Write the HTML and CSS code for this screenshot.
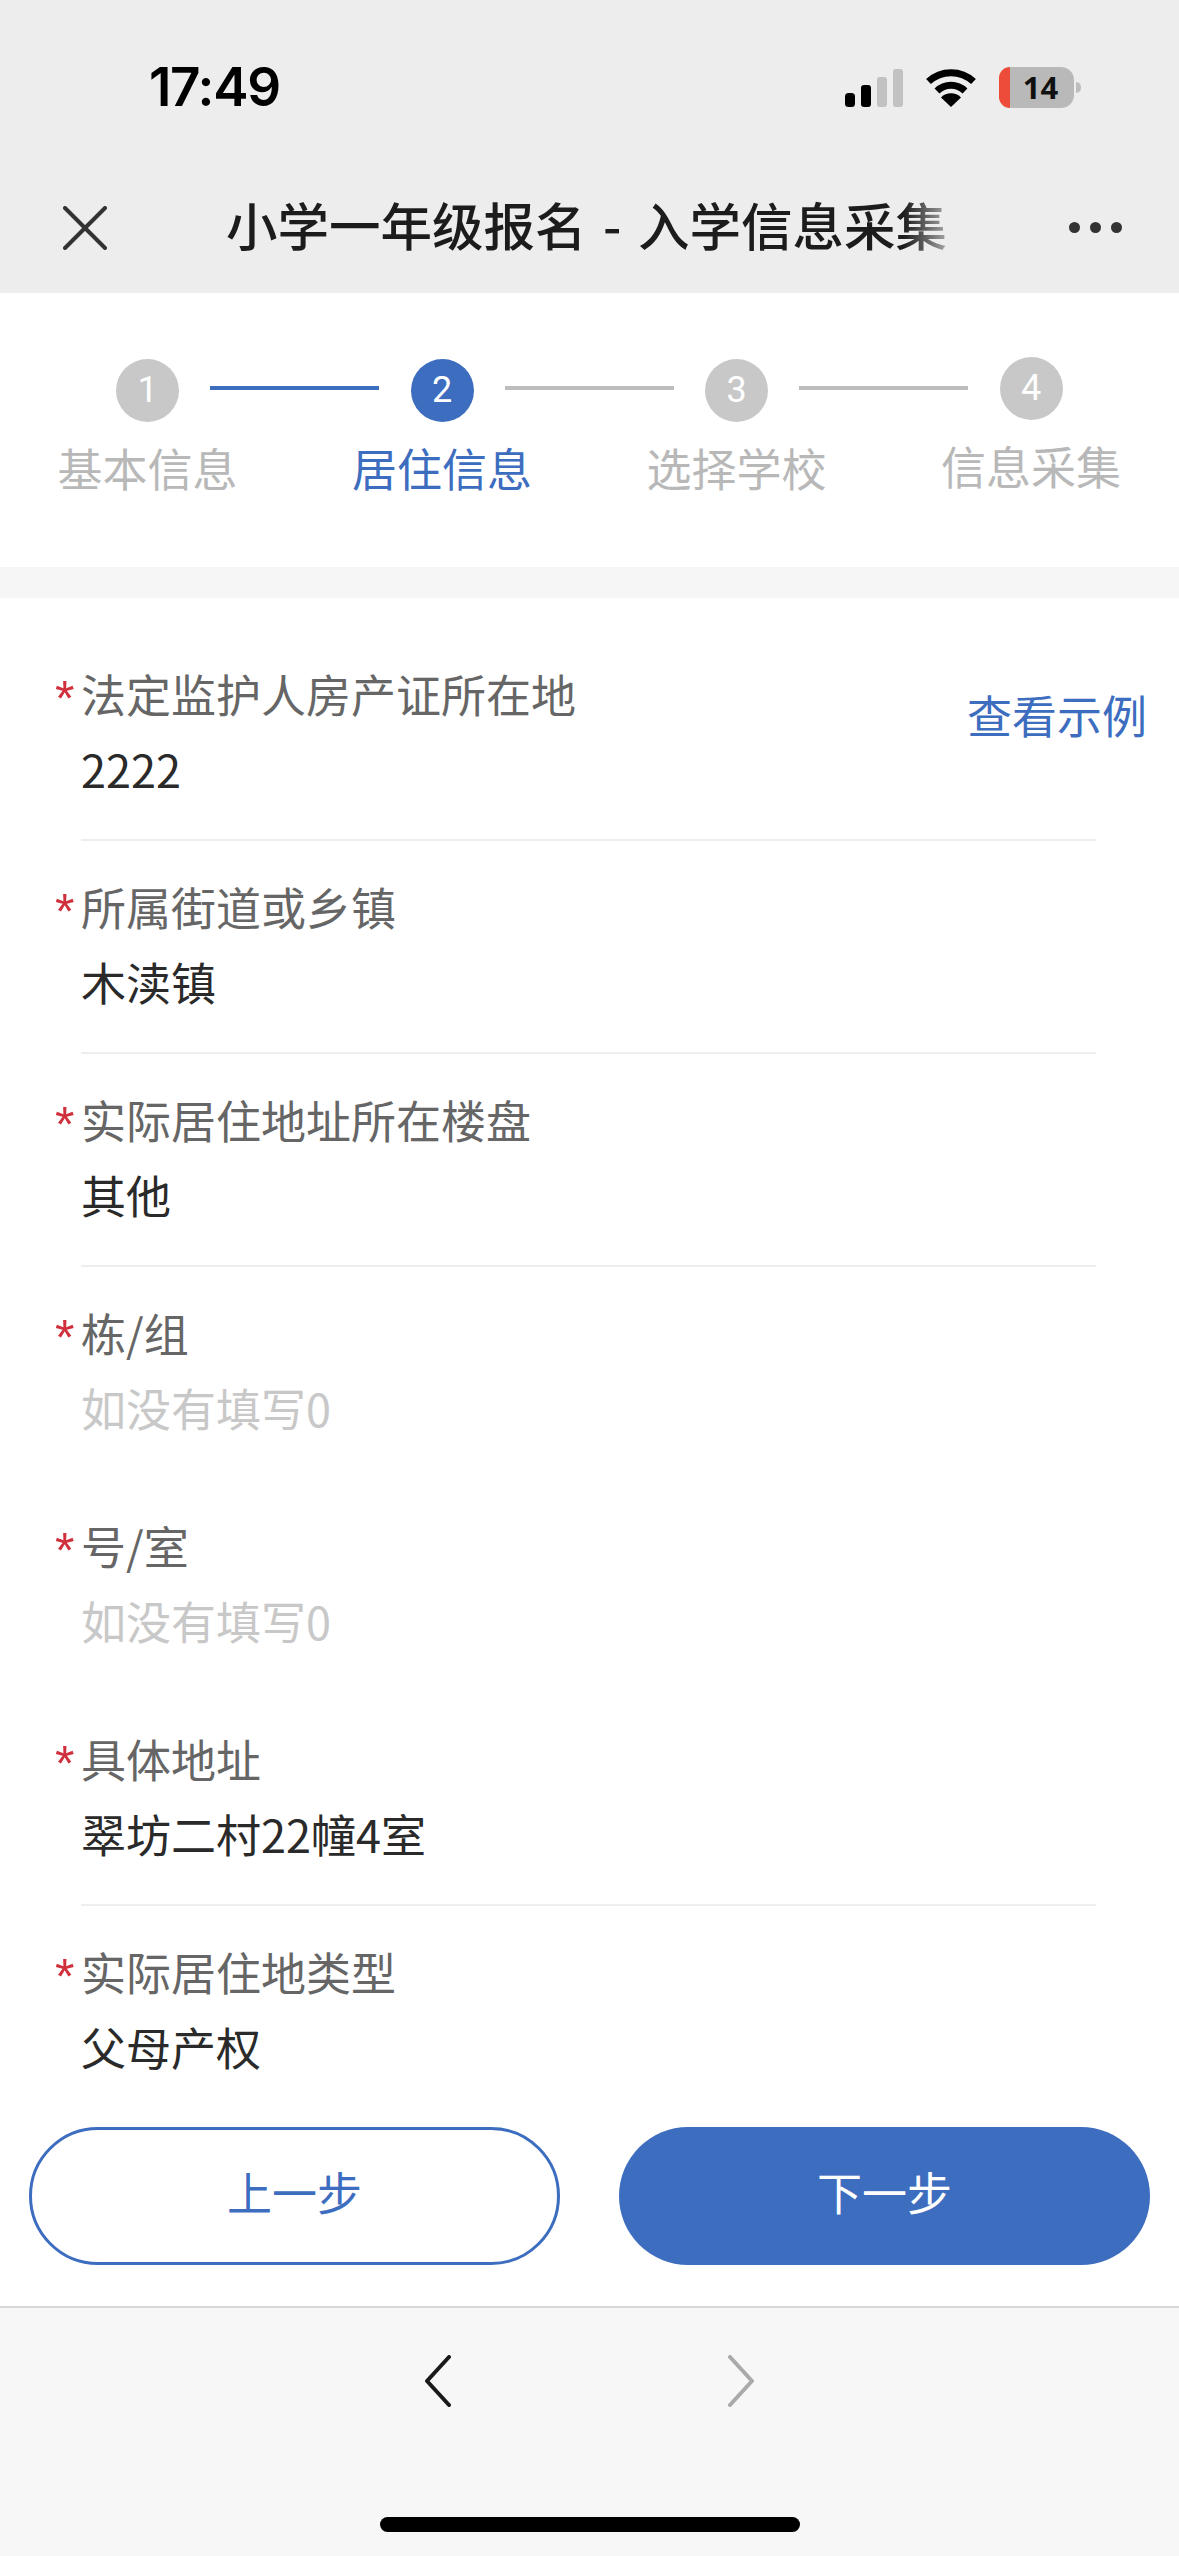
FILE: index.html
```html
<!DOCTYPE html>
<html lang="zh-CN">
<head>
<meta charset="utf-8">
<title>小学一年级报名 - 入学信息采集</title>
<link rel="stylesheet" href="styles.css">
</head>
<body>
<div class="phone">
  <header class="top">
    <div class="status">
      <span class="time">17:49</span>
      <div class="status-icons">
        <svg class="signal" width="58" height="38" viewBox="0 0 58 38"><rect x="0" y="24" width="10" height="14" rx="3.5" fill="#000"/><rect x="16" y="16" width="10" height="22" rx="3" fill="#000"/><rect x="32" y="8" width="10" height="30" rx="3" fill="#c2c2c2"/><rect x="48" y="0" width="10" height="38" rx="3" fill="#c2c2c2"/></svg>
        <svg class="wifi" width="50" height="38" viewBox="0 0 50 38"><path d="M2.5 12.5 A33 33 0 0 1 47.500 12.500" fill="none" stroke="#000" stroke-width="7"/><path d="M11 22 A20 20 0 0 1 39 22" fill="none" stroke="#000" stroke-width="7"/><path d="M25 38 L15 28.500 A14 14 0 0 1 35 28.500 Z" fill="#000"/></svg>
        <div class="battery"><span class="battery-level"></span><span class="battery-num">14</span><span class="battery-nub"></span></div>
      </div>
    </div>
    <div class="navbar">
      <svg class="close" width="44" height="44" viewBox="0 0 44 44"><path d="M2 2 L42 42 M42 2 L2 42" stroke="#333" stroke-width="4" stroke-linecap="round"/></svg>
      <h1 class="title">小学一年级报名 - 入学信息采集</h1>
      <div class="dots"><i></i><i></i><i></i></div>
    </div>
  </header>

  <section class="steps">
    <div class="step"><span class="dot">1</span><span class="step-label">基本信息</span></div>
    <span class="link link-on"></span>
    <div class="step on"><span class="dot">2</span><span class="step-label">居住信息</span></div>
    <span class="link"></span>
    <div class="step"><span class="dot">3</span><span class="step-label">选择学校</span></div>
    <span class="link"></span>
    <div class="step last"><span class="dot">4</span><span class="step-label">信息采集</span></div>
  </section>

  <div class="band"></div>

  <main class="form">
    <div class="row"><div class="label"><b>*</b>法定监护人房产证所在地</div><div class="value">2222</div><a class="example">查看示例</a></div>
    <div class="row"><div class="label"><b>*</b>所属街道或乡镇</div><div class="value">木渎镇</div></div>
    <div class="row"><div class="label"><b>*</b>实际居住地址所在楼盘</div><div class="value">其他</div></div>
    <div class="row plain"><div class="label"><b>*</b>栋/组</div><div class="value ph">如没有填写0</div></div>
    <div class="row plain"><div class="label"><b>*</b>号/室</div><div class="value ph">如没有填写0</div></div>
    <div class="row"><div class="label"><b>*</b>具体地址</div><div class="value">翠坊二村22幢4室</div></div>
    <div class="row plain"><div class="label"><b>*</b>实际居住地类型</div><div class="value">父母产权</div></div>
  </main>

  <div class="actions">
    <button class="btn ghost">上一步</button>
    <button class="btn solid">下一步</button>
  </div>

  <footer class="toolbar">
    <div class="arrows">
      <svg width="28" height="52" viewBox="0 0 28 52"><path d="M25 2 L3 26 L25 50" fill="none" stroke="#1a1a1a" stroke-width="4" stroke-linecap="round" stroke-linejoin="round"/></svg>
      <svg width="28" height="52" viewBox="0 0 28 52"><path d="M3 2 L25 26 L3 50" fill="none" stroke="#aaa" stroke-width="4" stroke-linecap="round" stroke-linejoin="round"/></svg>
    </div>
    <div class="home"></div>
  </footer>
</div>
</body>
</html>
```
FILE: styles.css
```css
* { box-sizing: border-box; }
html, body { margin: 0; padding: 0; }
body { background: #fff; font-family: "Noto Sans CJK SC", "Noto Sans", sans-serif; }
.phone { width: 1179px; height: 2556px; display: flex; flex-direction: column; overflow: hidden; background: #fff; }

.top { height: 293px; background: #ededed; flex: none; }
.status { height: 176px; display: flex; justify-content: space-between; padding: 60px 105px 0 149px; }
.time { font: 600 53px/54px Inter, sans-serif; letter-spacing: -1.300px; color: #000; }
.status-icons { display: flex; gap: 23px; height: 42px; margin-top: 7px; }
.signal { margin-top: 2px; }
.wifi { margin-top: 2px; }
.battery { position: relative; width: 75px; height: 41px; border-radius: 13px; background: #b9b9b9; display: flex; align-items: center; justify-content: center; }
.battery-level { position: absolute; left: 0; top: 0; bottom: 0; width: 11px; background: #ee4c3b; border-radius: 13px 0 0 13px; }
.battery-num { position: relative; left: 4px; font: 700 31px/41px "Open Sans", sans-serif; color: #111; }
.battery-nub { position: absolute; right: -7px; top: 15px; width: 5px; height: 11px; background: #bdbdbd; border-radius: 0 5px 5px 0; }

.navbar { height: 117px; display: flex; align-items: center; padding: 0 57px 14px 63px; }
.close { flex: none; }
.title { flex: none; margin: 0 0 8px 119px; white-space: nowrap; font: 500 51.500px/70px "Noto Sans CJK SC", sans-serif; word-spacing: 5px; color: #1c1c1c; -webkit-mask-image: linear-gradient(90deg, #000 94%, rgba(0,0,0,.35) 100%); mask-image: linear-gradient(90deg, #000 94%, rgba(0,0,0,.35) 100%); }
.dots { display: flex; gap: 10px; margin-left: auto; }
.dots i { width: 11px; height: 11px; border-radius: 50%; background: #333; }

.steps { height: 274px; flex: none; display: flex; align-items: flex-start; padding: 66px 0 0 56.500px; }
.step { width: 182px; flex: none; display: flex; flex-direction: column; align-items: center; color: #bbb; }
.dot { width: 63px; height: 63px; border-radius: 50%; background: #c8c8c8; color: #fff; font: 400 36px/63px Roboto, sans-serif; text-align: center; }
.step-label { font-size: 45px; line-height: 60px; margin-top: 16px; white-space: nowrap; color: #b8b8b8; }
.step.on .dot { background: #3d6dbf; }
.step.on .step-label { color: #3d6dbf; }
.step.last { margin-top: -2px; }
.link { flex: none; width: 169px; height: 4px; margin: 27px -28.250px 0 -28.250px; background: #bdbdbd; }
.link-on { background: #3d6dbf; }

.band { height: 31px; background: #f6f6f6; flex: none; }

.form { flex: 1; min-height: 0; overflow: hidden; padding: 30px 83px 0 81px; }
.row { position: relative; height: 213px; padding-top: 34px; border-bottom: 2px solid #eee; }
.row.plain { border-bottom-color: transparent; }
.label { position: relative; font-size: 45px; line-height: 64px; color: #666; white-space: nowrap; }
.label b { position: absolute; left: -26px; top: 5px; color: #d0303c; font: 400 50px/64px "Liberation Sans", sans-serif; }
.value { font-size: 45px; line-height: 64px; margin-top: 11px; color: #2a2a2a; white-space: nowrap; }
.value.ph { color: #c8c8c8; }
.example { position: absolute; right: -51px; top: 55px; font-size: 45px; line-height: 64px; color: #3d6dbf; }

.actions { flex: none; height: 179px; background: #fff; display: flex; justify-content: space-between; padding: 0 29px; }
.btn { width: 531px; height: 138px; border-radius: 69px; padding: 0 0 10px; font: 400 45px/1 "Noto Sans CJK SC", sans-serif; }
.ghost { background: #fff; border: 3px solid #3d6dbf; color: #3d6dbf; }
.solid { background: #3d6dbf; border: 0; color: #fff; }

.toolbar { flex: none; height: 250px; background: #f7f7f7; border-top: 2px solid #d8d8d8; display: flex; flex-direction: column; align-items: center; }
.arrows { display: flex; gap: 275px; margin-top: 47px; }
.home { width: 420px; height: 15px; border-radius: 8px; background: #000; margin-top: 110px; }
```
